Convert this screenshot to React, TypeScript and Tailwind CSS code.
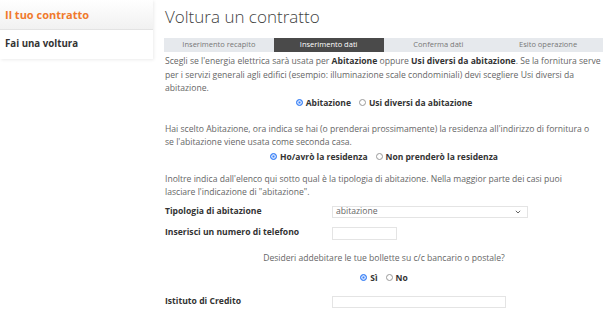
import React from "react";

const steps = ["Inserimento recapito", "Inserimento dati", "Conferma dati", "Esito operazione"];

function Radio({ checked }: { checked?: boolean }) {
  return (
    <span
      className={`inline-block w-[7px] h-[7px] rounded-full border mr-[3px] ${
        checked ? "border-[#3b82f6] bg-[#3b82f6] shadow-[inset_0_0_0_1.5px_#cfe0ff]" : "border-[#999] bg-white"
      }`}
    />
  );
}

function RadioRow({ a, b }: { a: string; b: string }) {
  return (
    <div className="flex justify-center items-center gap-[8px] h-[13.5px] text-[8.5px] font-bold text-[#333]">
      <span className="flex items-center">
        <Radio checked />
        {a}
      </span>
      <span className="flex items-center">
        <Radio />
        {b}
      </span>
    </div>
  );
}

export default function App() {
  return (
    <div className="w-[610px] h-[314px] overflow-hidden bg-white flex font-['Open_Sans',sans-serif] text-[#666]">
      <aside className="w-[153px] shrink-0 self-start shadow-[1px_1px_3px_rgba(0,0,0,0.08)] bg-white">
        <div className="h-[30px] flex items-center pt-[1px] px-[5px] border-b border-[#e3e3e3] bg-gradient-to-b from-white to-[#f1f1f1]">
          <span className="text-[11px] font-bold text-[#f07a2c]">Il tuo contratto</span>
        </div>
        <div className="h-[29px] flex items-center px-[5px]">
          <span className="text-[9.7px] font-bold text-[#333]">Fai una voltura</span>
        </div>
      </aside>

      <main className="flex-1 pl-[11px] pr-[7px]">
        <h1 className="text-[17px] font-light text-[#3f3f3f] leading-none pt-[8px] pl-[1px]">Voltura un contratto</h1>

        <div className="mt-[13px] flex h-[14px] bg-[#e6e9ed] text-[7.5px]">
          {steps.map((s, i) => (
            <div
              key={s}
              className={`flex-1 flex items-center justify-center ${
                i === 1 ? "bg-[#4a4a4a] text-white" : "text-[#777]"
              }`}
            >
              {s}
            </div>
          ))}
        </div>

        <div className="text-[8.6px] leading-[13.5px] pl-[1px]">
          <p className="mt-[3px] whitespace-nowrap">
            Scegli se l'energia elettrica sarà usata per <b className="text-[#333]">Abitazione</b> oppure{" "}
            <b className="text-[#333]">Usi diversi da abitazione</b>. Se la fornitura serve
            <br />
            per i servizi generali agli edifici (esempio: illuminazione scale condominiali) devi scegliere Usi diversi da
            <br />
            abitazione.
          </p>
          <div>
            <RadioRow a="Abitazione" b="Usi diversi da abitazione" />
          </div>
          <p className="mt-[13.5px] whitespace-nowrap">
            Hai scelto Abitazione, ora indica se hai (o prenderai prossimamente) la residenza all'indirizzo di fornitura o
            <br />
            se l'abitazione viene usata come seconda casa.
          </p>
          <div>
            <RadioRow a="Ho/avrò la residenza" b="Non prenderò la residenza" />
          </div>
          <p className="mt-[9.5px] whitespace-nowrap">
            Inoltre indica dall'elenco qui sotto qual è la tipologia di abitazione. Nella maggior parte dei casi puoi
            <br />
            lasciare l'indicazione di "abitazione".
          </p>

          <div className="mt-[6px] flex items-center h-[13px]">
            <span className="w-[167px] font-bold text-[#333]">Tipologia di abitazione</span>
            <div className="w-[196px] h-[12px] border border-[#e4e4e4] flex items-center justify-between pl-[3px] pr-[6px]">
              <span className="text-[#666]">abitazione</span>
              <svg width="6" height="4" viewBox="0 0 6 4">
                <path d="M0.8 0.8 L3 3 L5.2 0.8" fill="none" stroke="#666" strokeWidth="1" />
              </svg>
            </div>
          </div>

          <div className="mt-[8px] flex items-center h-[13px]">
            <span className="w-[167px] font-bold text-[#333]">Inserisci un numero di telefono</span>
            <div className="w-[65px] h-[13px] border border-[#e4e4e4]" />
          </div>

          <p className="mt-[12px] text-center">Desideri addebitare le tue bollette su c/c bancario o postale?</p>
          <div className="mt-[5.5px]">
            <RadioRow a="Sì" b="No" />
          </div>

          <div className="mt-[11px] flex items-center h-[13px]">
            <span className="w-[167px] font-bold text-[#333]">Istituto di Credito</span>
            <div className="w-[174px] h-[12px] border border-[#e4e4e4]" />
          </div>
        </div>
      </main>
    </div>
  );
}
